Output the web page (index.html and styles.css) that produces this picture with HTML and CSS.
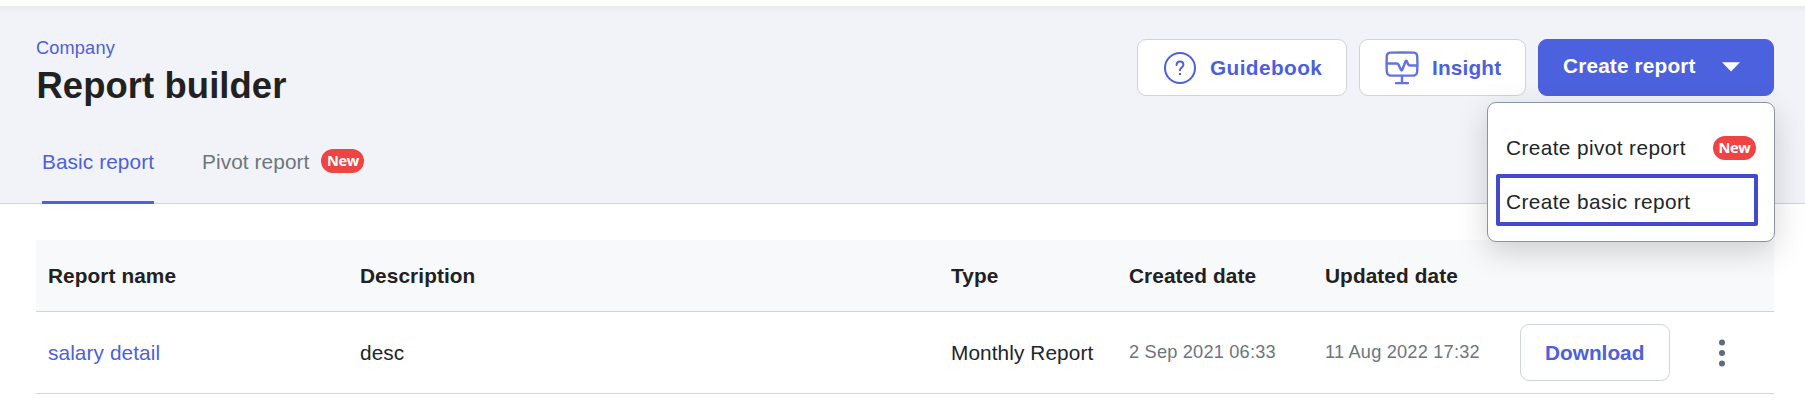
FILE: index.html
```html
<!DOCTYPE html>
<html lang="en">
<head>
<meta charset="utf-8">
<title>Report builder</title>
<link rel="stylesheet" href="styles.css">
</head>
<body>
<header class="page-header">
  <div class="header-top">
    <div class="heading">
      <a class="breadcrumb">Company</a>
      <h1 class="title">Report builder</h1>
    </div>
    <div class="actions">
      <button class="btn btn-guide">
        <svg class="btn-icon" viewBox="0 0 34 34" fill="none" stroke="currentColor" stroke-width="2" stroke-linecap="round" stroke-linejoin="round"><circle cx="17" cy="17" r="15"/><path d="M13.600 14c0-2.300 1.500-3.600 3.400-3.600s3.400 1.400 3.400 3.400c0 2.700-3.400 2.700-3.400 5.400"/><path d="M16 22h2v2h-2z" fill="currentColor" stroke="none"/></svg>
        <span>Guidebook</span>
      </button>
      <button class="btn btn-insight">
        <svg class="btn-icon" viewBox="0 0 34 34" fill="none" stroke="currentColor" stroke-width="2.400" stroke-opacity=".88" stroke-linecap="round" stroke-linejoin="round"><path d="M5 1.600Q17 1.300 29 1.600Q31.900 1.900 32.200 5Q32.700 12.500 32.200 20.500Q31.900 24 29 24.500Q17 24.800 5 24.500Q2.100 24 1.800 20.500Q1.300 12.500 1.800 5Q2.100 1.900 5 1.600zM1.800 12.500H11.500Q13 12.500 13.600 13.800L16 19Q16.600 20 17.200 19L20.600 10.200Q21.200 9.200 21.800 10.200L23.200 13.400Q23.800 14.500 25 14.500H32.200M17 25v6.500M11 32.100H23"/></svg>
        <span>Insight</span>
      </button>
      <div class="create">
        <button class="btn btn-create">
          <span>Create report</span>
          <svg class="caret" viewBox="0 0 18 10"><path d="M0 0.300H18L9 9.500z" fill="currentColor"/></svg>
        </button>
        <div class="menu">
          <div class="menu-item"><span>Create pivot report</span><span class="badge">New</span></div>
          <div class="menu-item selected"><span>Create basic report</span></div>
        </div>
      </div>
    </div>
  </div>
  <nav class="tabs">
    <a class="tab active">Basic report</a>
    <a class="tab">Pivot report<span class="badge">New</span></a>
  </nav>
</header>
<main class="table">
  <div class="row head">
    <span>Report name</span><span>Description</span><span>Type</span><span>Created date</span><span>Updated date</span><span></span><span></span>
  </div>
  <div class="row">
    <a class="link">salary detail</a><span>desc</span><span class="type">Monthly Report</span><span class="date">2 Sep 2021 06:33</span><span class="date">11 Aug 2022 17:32</span>
    <button class="btn btn-download">Download</button>
    <svg class="more" viewBox="0 0 6 28"><circle cx="3" cy="3.500" r="3"/><circle cx="3" cy="14" r="3"/><circle cx="3" cy="24.500" r="3"/></svg>
  </div>
</main>
</body>
</html>
```
FILE: styles.css
```css
* { box-sizing: border-box; }
body {
  margin: 0;
  padding-top: 6px;
  height: 400px;
  overflow: hidden;
  background: #fff;
  color: #212529;
  font: 20.8px/24px "Liberation Sans", Arial, sans-serif;
  letter-spacing: 0.09px;
}
.page-header {
  height: 198px;
  background: linear-gradient(#e6e8ec, #f2f3f8 6px);
  border-bottom: 1px solid #ced4da;
}
.header-top {
  display: flex;
  justify-content: space-between;
  height: 125px;
  padding: 33px 31px 0 36px;
}
.heading { display: flex; flex-direction: column; }
.breadcrumb { font-size: 18.2px; line-height: 18px; color: #4c5fdc; letter-spacing: 0.15px; }
.title { margin: 8px 0 0 0.5px; font-size: 36.4px; line-height: 42px; color: #212121; }
.actions { display: flex; gap: 12px; height: 57px; }
.btn {
  display: flex;
  align-items: center;
  height: 57px;
  padding: 0 24px;
  border: 1px solid #ced4da;
  border-radius: 9px;
  background: #fff;
  color: #4c5fdc;
  font: bold 20.8px/24px "Liberation Sans", Arial, sans-serif;
  letter-spacing: 0.15px;
  white-space: nowrap;
}
.btn-icon { width: 34px; height: 34px; margin: 0 13px 0 1px; flex: none; }
.btn-guide { width: 210px; letter-spacing: 0.4px; }
.btn-insight { width: 167px; }
.create { position: relative; }
.btn-create {
  width: 236px;
  padding-bottom: 4px;
  border-color: #4c61dd;
  background: #4c61dd;
  color: #fff;
}
.caret { width: 18px; height: 10px; margin: 3px 0 0 26px; }
.menu {
  position: absolute;
  z-index: 2;
  top: 63px;
  right: -1px;
  width: 288px;
  height: 140px;
  padding: 19px 16px 15px 8px;
  border: 1px solid #8993a5;
  border-radius: 9px;
  background: #fff;
  box-shadow: 0 10px 30px rgba(0, 0, 0, 0.17);
  letter-spacing: 0.4px;
}
.menu-item {
  display: flex;
  align-items: center;
  justify-content: space-between;
  height: 52px;
  padding: 0 2px 0 10px;
}
.menu-item.selected { padding: 3px 0 0 6px; border: 4px solid #404acb; border-radius: 2px; }
.badge {
  display: inline-block;
  width: 43px;
  height: 24px;
  border-radius: 12px;
  background: #ef4444;
  color: #fff;
  font: bold 14.6px/23px "Open Sans", sans-serif;
  letter-spacing: -0.3px;
  text-align: center;
}
.tabs { display: flex; gap: 48px; height: 73px; padding-left: 42px; }
.tab { display: flex; align-items: flex-start; height: 73px; padding-top: 19px; color: #6c757d; }
.tab.active { width: 112px; white-space: nowrap; color: #4c5fdc; border-bottom: 3px solid #4c61dd; }
.tab .badge { margin: -1px 0 0 12px; }
.table { margin: 36px 31px 0 36px; }
.row {
  display: grid;
  grid-template-columns: 312px 591px 178px 196px 195px 199px 1fr;
  align-items: center;
  height: 82px;
  padding-left: 12px;
  border-bottom: 1px solid #d0d4e0;
}
.head { height: 72px; background: #f8f9fb; border-color: #ced4da; color: #212121; font-weight: bold; }
.link { color: #4c5fdc; }
.type { white-space: nowrap; }
.date { font-size: 18.2px; color: #6c757d; letter-spacing: 0.2px; margin-top: -2px; }
.btn-download { width: 150px; letter-spacing: 0; }
.more { width: 6px; height: 28px; fill: #606b79; }
```
